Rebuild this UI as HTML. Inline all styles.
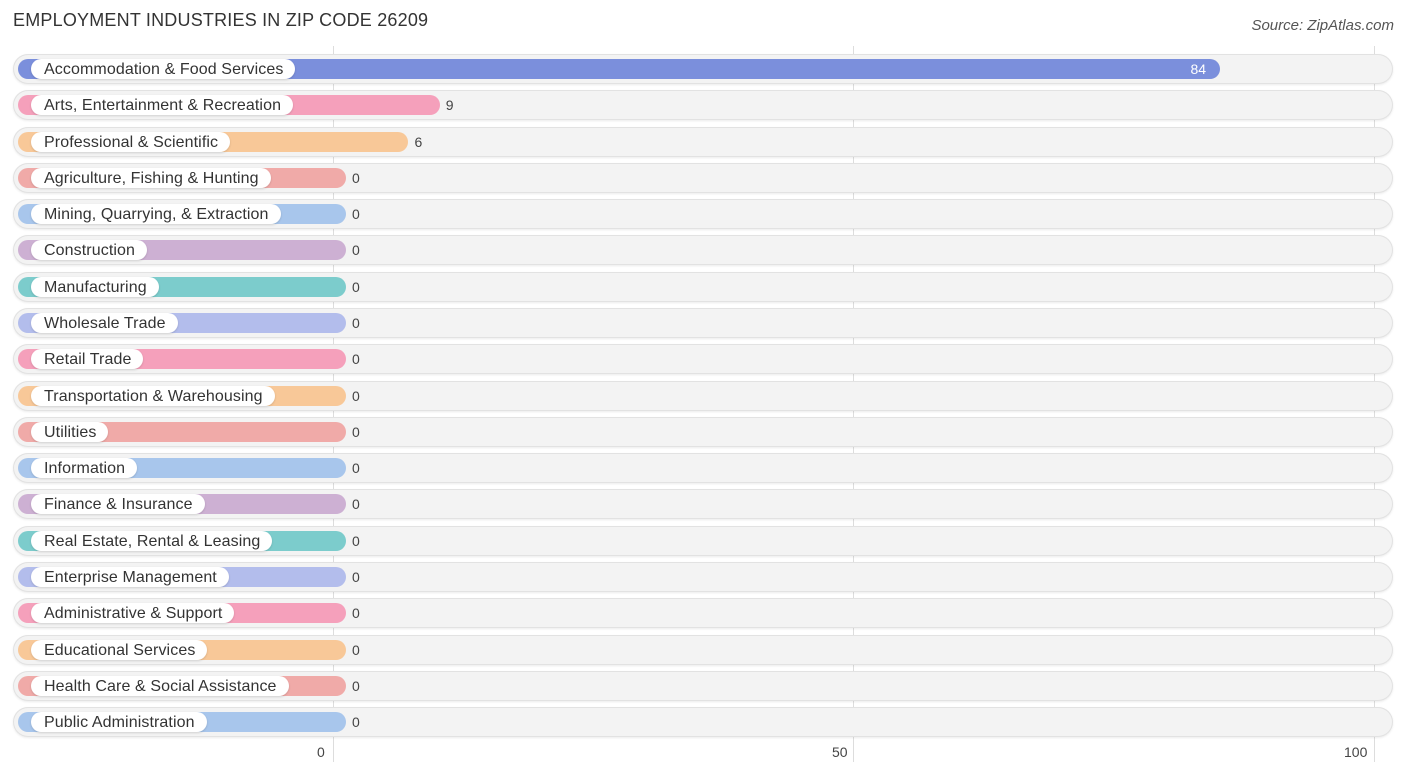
<!DOCTYPE html>
<html><head><meta charset="utf-8"><style>
body{margin:0;width:1406px;height:777px;background:#fff;font-family:"Liberation Sans",sans-serif;position:relative;overflow:hidden}
.t{position:absolute;left:13px;top:10px;font-size:18px;color:#333;letter-spacing:0.2px}
.src{position:absolute;right:12px;top:17px;font-size:15px;color:#555;font-style:italic}
.g{position:absolute;top:46px;width:1px;height:716px;background:#ddd}
.ax{position:absolute;top:744px;font-size:14px;color:#444}
.row{position:absolute;left:13px;width:1380px;height:30px;border-radius:15px;background:#f3f3f3;box-shadow:inset 0 0 0 1px #e2e2e2,0 1px 2px rgba(0,0,0,.08)}
.bar{position:absolute;left:5px;top:5px;height:20px;border-radius:10px}
.lab{position:absolute;left:18px;top:5px;height:20px;line-height:21px;padding:0 12px 0 13px;background:#fff;border-radius:10px;font-size:16px;letter-spacing:0.1px;color:#333;white-space:nowrap;box-shadow:0 1px 2px rgba(0,0,0,.15)}
.v{position:absolute;top:5px;line-height:21px;font-size:14px;color:#444}
</style></head><body>
<div class="t">EMPLOYMENT INDUSTRIES IN ZIP CODE 26209</div>
<div class="src">Source: ZipAtlas.com</div>
<div class="g" style="left:333px"></div><div class="g" style="left:853px"></div><div class="g" style="left:1374px"></div>
<div class="ax" style="left:317px">0</div><div class="ax" style="left:832px">50</div><div class="ax" style="left:1344px">100</div>
<div id="c"></div>
<script>
var d=[["Accommodation & Food Services",84,"#7b8fdc"],["Arts, Entertainment & Recreation",9,"#f5a0bb"],["Professional & Scientific",6,"#f8c898"],["Agriculture, Fishing & Hunting",0,"#f0aaa8"],["Mining, Quarrying, & Extraction",0,"#a8c6ec"],["Construction",0,"#cdb0d3"],["Manufacturing",0,"#7ccccc"],["Wholesale Trade",0,"#b3bdec"],["Retail Trade",0,"#f5a0bb"],["Transportation & Warehousing",0,"#f8c898"],["Utilities",0,"#f0aaa8"],["Information",0,"#a8c6ec"],["Finance & Insurance",0,"#cdb0d3"],["Real Estate, Rental & Leasing",0,"#7ccccc"],["Enterprise Management",0,"#b3bdec"],["Administrative & Support",0,"#f5a0bb"],["Educational Services",0,"#f8c898"],["Health Care & Social Assistance",0,"#f0aaa8"],["Public Administration",0,"#a8c6ec"]];
var h="";
d.forEach(function(r,i){var top=54+i*36.28;var end=346+r[1]*10.41;var w=end-18;
h+='<div class="row" style="top:'+top.toFixed(1)+'px"><div class="bar" style="width:'+w+'px;background:'+r[2]+'"></div><div class="lab">'+r[0].replace(/&/g,"&amp;")+'</div>';
if(r[1]>50)h+='<div class="v" style="left:'+(end-13-30)+'px;color:#fff">'+r[1]+'</div>';
else h+='<div class="v" style="left:'+(end-13+6)+'px">'+r[1]+'</div>';
h+='</div>';});
document.getElementById("c").innerHTML=h;
</script>
</body></html>
